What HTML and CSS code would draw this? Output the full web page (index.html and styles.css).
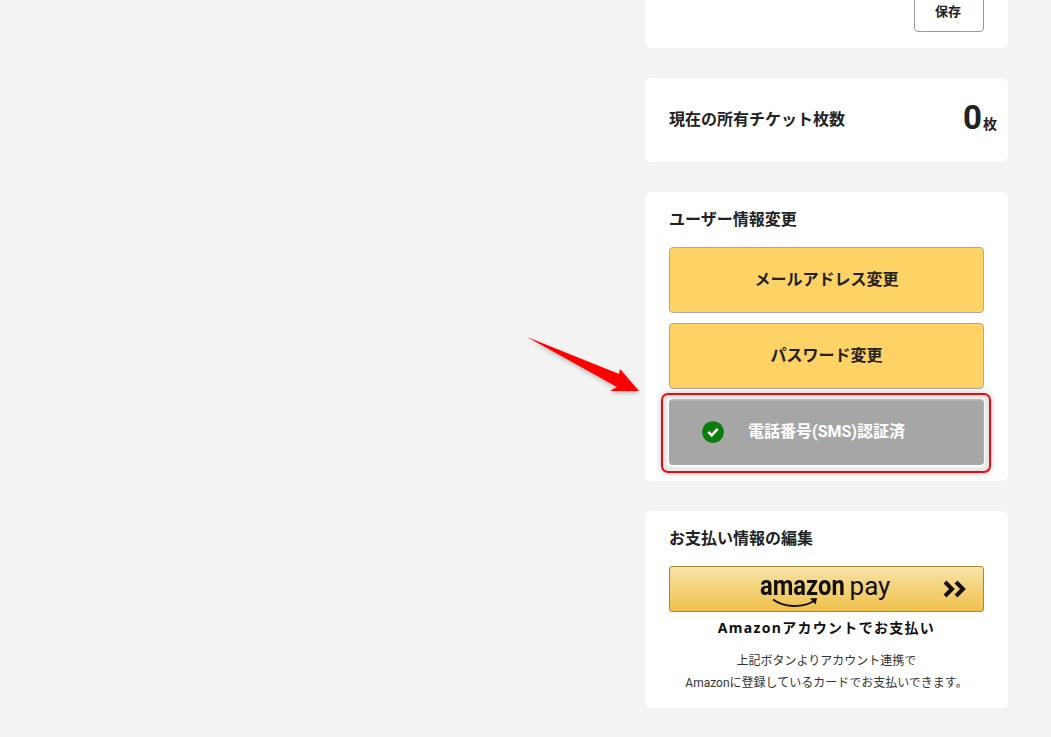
FILE: index.html
```html
<!DOCTYPE html>
<html lang="ja">
<head>
<meta charset="utf-8">
<title>マイページ</title>
<link rel="stylesheet" href="styles.css">
</head>
<body>
<main class="column">
  <section class="card card-save">
    <button class="btn-save">保存</button>
  </section>
  <section class="card card-ticket">
    <span class="ticket-label">現在の所有チケット枚数</span>
    <span class="ticket-value"><b class="ticket-num">0</b><span class="ticket-unit">枚</span></span>
  </section>
  <section class="card card-user">
    <h2 class="card-title">ユーザー情報変更</h2>
    <div class="stack">
      <a class="btn btn-yellow">メールアドレス変更</a>
      <a class="btn btn-yellow">パスワード変更</a>
      <div class="btn btn-gray">
        <svg class="check" viewBox="0 0 22 22" width="22" height="22"><circle cx="11" cy="11" r="10.800" fill="#0a7d0a"/><path d="M6.300 10.800l3.400 3.500 6-6.400" fill="none" stroke="#fff" stroke-width="2.600"/></svg>
        <span>電話番号(SMS)認証済</span>
        <div class="highlight"></div>
      </div>
    </div>
  </section>
  <section class="card card-pay">
    <h2 class="card-title">お支払い情報の編集</h2>
    <a class="btn-amazon">
      <span class="amazon-logo">
        <span class="amazon-box"><span class="amazon-word">amazon</span><svg class="smile" viewBox="0 0 46 10" width="46" height="10"><path d="M1 1.500c11 8 29 8.500 40 2" fill="none" stroke="#111" stroke-width="2"/><path d="M38 .5l7-.5-1.500 6.500z" fill="#111"/></svg></span>
        <span class="pay-word">pay</span>
      </span>
      <svg class="chev" viewBox="0 0 24 18" width="24" height="18"><path d="M2 2l7 7-7 7M13 2l7 7-7 7" fill="none" stroke="#111" stroke-width="4"/></svg>
    </a>
    <p class="amazon-caption">Amazonアカウントでお支払い</p>
    <p class="amazon-note">上記ボタンよりアカウント連携で<br>Amazonに登録しているカードでお支払いできます。</p>
  </section>
</main>
<svg class="arrow" viewBox="0 0 120 60" width="120" height="60"><defs><filter id="s" x="-20%" y="-20%" width="140%" height="160%"><feDropShadow dx="0" dy="2" stdDeviation="2" flood-color="#000" flood-opacity=".25"/></filter></defs><path d="M2 1L94 38 95 33 114 55 85 55 92 51z" fill="#fc0006" filter="url(#s)"/></svg>
</body>
</html>
```

FILE: styles.css
```css
* { box-sizing: border-box; }
html, body { height: 100%; }
body {
  margin: 0;
  background: #f3f3f3;
  color: #222;
  font-family: Roboto, "Noto Sans CJK JP", sans-serif;
  overflow: hidden;
  position: relative;
}
.column {
  width: 363px;
  margin-left: 645px;
  display: flex;
  flex-direction: column;
  gap: 30px;
}
.card {
  background: #fff;
  border-radius: 6px;
}
.card-save {
  height: 48px;
  border-radius: 0 0 6px 6px;
  padding: 0 24px 16px;
  display: flex;
  justify-content: flex-end;
  align-items: flex-end;
  overflow: hidden;
}
.btn-save {
  flex: none;
  width: 70px;
  height: 48px;
  padding: 4px 2px 0 0;
  background: #fff;
  border: 1px solid #999;
  border-radius: 4px;
  font: 700 13px "Noto Sans CJK JP", sans-serif;
  color: #222;
}
.card-ticket {
  height: 84px;
  padding: 0 11px 0 24px;
  display: flex;
  justify-content: space-between;
  align-items: center;
}
.ticket-label { font: 700 16px "Noto Sans CJK JP", sans-serif; padding-bottom: 4px; }
.ticket-value { display: flex; align-items: baseline; gap: 1px; margin-top: -4px; }
.ticket-num { font: 700 33px/40px Roboto, sans-serif; }
.ticket-unit { font: 700 14px "Noto Sans CJK JP", sans-serif; }
.card-user { height: 289px; padding: 15px 24px 0; }
.card-pay { height: 197px; padding: 15px 24px 0; }
.card-title {
  margin: 0;
  font: 700 16px/23px "Noto Sans CJK JP", sans-serif;
}
.stack {
  margin-top: 17px;
  display: flex;
  flex-direction: column;
  gap: 10px;
}
.btn {
  height: 66px;
  padding-bottom: 4px;
  border-radius: 4px;
  display: flex;
  align-items: center;
  justify-content: center;
  font-weight: 700;
  font-size: 16px;
  position: relative;
}
.btn-yellow {
  background: #ffd266;
  border: 1px solid #a9a9a0;
  font-family: "Noto Sans CJK JP", sans-serif;
  color: #222;
}
.btn-gray {
  background: #a6a6a6;
  color: #fff;
}
.check { position: absolute; left: 33px; top: 22px; }
.highlight {
  position: absolute;
  inset: -6px -7px -8px -8px;
  border: 2px solid #ea0a10;
  border-radius: 7px;
  box-shadow: 0 0 6px rgba(0,0,0,.25), inset 0 0 3px 4px #e6e6e6;
}
.btn-amazon {
  margin-top: 17px;
  height: 46px;
  border: 1px solid #a88734;
  border-radius: 3px;
  background: linear-gradient(#f8e2a6, #f0c14b);
  display: flex;
  align-items: center;
  justify-content: center;
  position: relative;
}
.amazon-logo { display: flex; align-items: baseline; gap: 5px; color: #111; margin-top: -7px; margin-left: -3px; }
.amazon-box { width: 85px; position: relative; display: block; }
.amazon-word {
  display: block;
  font: 700 28px/30px Roboto, sans-serif;
  transform: scaleX(.85);
  transform-origin: left center;
  white-space: nowrap;
}
.pay-word { font: 400 26px/30px Roboto, sans-serif; }
.smile { position: absolute; left: 12px; top: 27px; }
.chev { position: absolute; right: 16px; top: 13px; }
.amazon-caption {
  margin: 6px 0 0;
  text-align: center;
  font: 700 14px/20px "Noto Sans", "Noto Sans CJK JP", sans-serif;
  letter-spacing: 1.300px;
  color: #111;
}
.amazon-note {
  margin: 12px 0 0;
  text-align: center;
  font: 400 12px/22px Roboto, "Noto Sans CJK JP", sans-serif;
  color: #333;
}
.arrow { position: absolute; left: 525px; top: 336px; }
```
